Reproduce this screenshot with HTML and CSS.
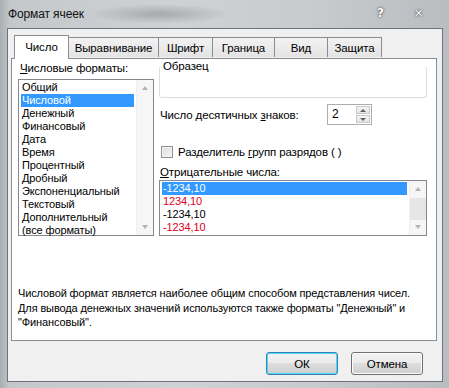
FILE: index.html
```html
<!DOCTYPE html>
<html>
<head>
<meta charset="utf-8">
<link rel="stylesheet" href="styles.css">
</head>
<body>
<div class="window">
  <div class="titlebar">
    <span class="title">Формат ячеек</span>
    <span class="ctl help">?</span>
    <span class="ctl close">✕</span>
  </div>
  <div class="client">
    <div class="tabs">
      <div class="tab active">Число</div>
      <div class="tab">Выравнивание</div>
      <div class="tab">Шрифт</div>
      <div class="tab">Граница</div>
      <div class="tab">Вид</div>
      <div class="tab">Защита</div>
    </div>
    <div class="panel">
      <div class="columns">
        <div class="leftcol">
          <div class="label"><u>Ч</u>исловые форматы:</div>
          <div class="listbox formats">
            <div class="items">
              <div class="item">Общий</div>
              <div class="item sel">Числовой</div>
              <div class="item">Денежный</div>
              <div class="item">Финансовый</div>
              <div class="item">Дата</div>
              <div class="item">Время</div>
              <div class="item">Процентный</div>
              <div class="item">Дробный</div>
              <div class="item">Экспоненциальный</div>
              <div class="item">Текстовый</div>
              <div class="item">Дополнительный</div>
              <div class="item">(все форматы)</div>
            </div>
            <div class="scrollbar disabled">
              <span class="arrow up"></span>
              <span class="track"></span>
              <span class="arrow down"></span>
            </div>
          </div>
        </div>
        <div class="rightcol">
          <fieldset class="sample">
            <legend>Образец</legend>
          </fieldset>
          <div class="decimals">
            <span class="label">Число десятичных <u>з</u>наков:</span>
            <div class="spinner">
              <span class="value">2</span>
              <div class="spinbtns">
                <span class="sbtn"><span class="arrow up"></span></span>
                <span class="sbtn"><span class="arrow down"></span></span>
              </div>
            </div>
          </div>
          <div class="check">
            <span class="box"></span>
            <span>Разделитель <u>г</u>рупп разрядов ( )</span>
          </div>
          <div class="label neglabel"><u>О</u>трицательные числа:</div>
          <div class="listbox negs">
            <div class="items">
              <div class="item sel">-1234,10</div>
              <div class="item red">1234,10</div>
              <div class="item">-1234,10</div>
              <div class="item red">-1234,10</div>
            </div>
            <div class="scrollbar">
              <span class="arrow up"></span>
              <span class="track"><span class="thumb"></span></span>
              <span class="arrow down"></span>
            </div>
          </div>
        </div>
      </div>
      <div class="desc">Числовой формат является наиболее общим способом представления чисел.<br>Для вывода денежных значений используются также форматы "Денежный" и<br>"Финансовый".</div>
    </div>
    <div class="buttons">
      <div class="btn default">ОК</div>
      <div class="btn">Отмена</div>
    </div>
  </div>
</div>
</body>
</html>
```

FILE: styles.css
```css
* { box-sizing: border-box; }
html, body { margin: 0; padding: 0; }
body {
  width: 449px;
  height: 388px;
  overflow: hidden;
  font-family: "Liberation Sans", Arial, sans-serif;
  font-size: 11px;
  letter-spacing: -0.12px;
  color: #000;
}
.window {
  width: 449px;
  height: 388px;
  display: flex;
  flex-direction: column;
  padding: 0 6px 6px 7px;
  background:
    radial-gradient(ellipse 70px 10px at 160px 14px, rgba(90,95,100,0.35), rgba(90,95,100,0) 100%),
    linear-gradient(90deg, #a8aeb2 0px, #c4c8cb 10px, #cfd2d4 40%, #c8cbcd 70%, #b9bdc0 100%);
}
.titlebar {
  height: 28px;
  display: flex;
  align-items: center;
  padding-left: 1px;
}
.title {
  font-size: 12px;
  color: #111;
  flex: 1;
  margin-top: -1px;
}
.ctl {
  color: #fff;
  font-weight: bold;
  text-shadow: 0 0 3px #555, 0 0 1px #333;
  font-family: "DejaVu Sans", sans-serif;
}
.help { font-size: 12px; margin-right: 30px; margin-top: -2px; }
.close { font-size: 11px; margin-right: 20px; margin-top: -2px; }
.client {
  flex: 1;
  background: #f0f0f0;
  border: 1px solid #6f7377;
  display: flex;
  flex-direction: column;
  padding: 6px 5px 0 3px;
}
.tabs {
  display: flex;
  align-items: flex-end;
  padding-left: 3px;
  height: 23px;
  position: relative;
  z-index: 1;
}
.tab {
  height: 20px;
  border: 1px solid #898c95;
  border-bottom: none;
  margin-left: -1px;
  background: linear-gradient(#f2f2f2, #e3e3e3);
  display: flex;
  align-items: center;
  justify-content: center;
  font-size: 11.5px;
  margin-bottom: 1px;
}
.tab:nth-child(2) { width: 91px; }
.tab:nth-child(3) { width: 55px; }
.tab:nth-child(4) { width: 63px; }
.tab:nth-child(5) { width: 54px; }
.tab:nth-child(6) { width: 55px; }
.tab.active {
  width: 55px;
  height: 24px;
  margin-bottom: -1px;
  background: #fff;
  margin-left: 0;
  padding-bottom: 2px;
  position: relative;
  z-index: 2;
}
.panel {
  height: 283px;
  background: #fff;
  border: 1px solid #898c95;
  display: flex;
  flex-direction: column;
  padding: 2px 9px 0 6px;
}
.columns {
  display: flex;
  gap: 5px;
}
.leftcol { width: 136px; }
.label { line-height: 14px; }
.leftcol .label { padding-left: 2px; margin-top: 0; margin-bottom: 4px; font-size: 11.5px; }
.listbox {
  border: 1px solid #828790;
  display: flex;
  background: #fff;
}
.formats { height: 157px; }
.items {
  flex: 1;
  padding: 1px 2px;
}
.item {
  height: 13px;
  line-height: 13px;
  padding-left: 1px;
  white-space: nowrap;
}
.item.sel { background: #3399ff; color: #fff; }
.item.red { color: #e0001b; }
.scrollbar {
  width: 17px;
  display: flex;
  flex-direction: column;
  background: #f6f6f6;
  border-left: 1px solid #f0f0f0;
}
.scrollbar .arrow { height: 16px; display: flex; align-items: center; justify-content: center; }
.scrollbar .track { flex: 1; display: flex; flex-direction: column; }
.arrow::before {
  content: "";
  display: block;
  width: 0;
  height: 0;
  border-left: 3.5px solid transparent;
  border-right: 3.5px solid transparent;
}
.arrow.up::before { border-bottom: 4px solid #b3b3b3; }
.arrow.down::before { border-top: 4px solid #b3b3b3; }
.negs .scrollbar .thumb { display: block; height: 22px; margin-top: 1px; background: #e6e6e6; }
.rightcol {
  flex: 1;
  display: flex;
  flex-direction: column;
}
.sample {
  margin: -2px 0 0 0;
  padding: 0;
  height: 39px;
  border: 1px solid #dcdcdc;
  border-top-color: transparent;
  border-radius: 3px;
}
.sample legend {
  padding: 0 1px;
  margin-left: 2px;
  line-height: 14px;
  font-size: 11.5px;
}
.decimals {
  display: flex;
  align-items: center;
  margin-top: 6px;
  height: 21px;
}
.decimals .label { width: 168px; padding-left: 1px; font-size: 11.5px; }
.spinner {
  width: 45px;
  height: 21px;
  border: 1px solid #abadb3;
  display: flex;
  background: #fff;
}
.spinner .value { flex: 1; padding-left: 4px; line-height: 19px; font-size: 12px; }
.spinbtns { width: 15px; height: 19px; display: flex; flex-direction: column; padding: 1px 1px 1px 0; gap: 1px; }
.sbtn {
  height: 8px;
  border: 1px solid #c8c8c8;
  background: linear-gradient(#f6f6f6, #e4e4e4);
  display: flex;
  align-items: center;
  justify-content: center;
}
.sbtn .arrow::before { border-left-width: 3px; border-right-width: 3px; }
.sbtn .arrow.up::before { border-bottom: 3px solid #606060; }
.sbtn .arrow.down::before { border-top: 3px solid #606060; }
.check {
  display: flex;
  align-items: center;
  gap: 5px;
  margin-top: 21px;
  padding-left: 2px;
  font-size: 11.5px;
}
.check .box {
  width: 12px;
  height: 12px;
  border: 1px solid #8e8f8f;
  background: linear-gradient(135deg, #dcdcdc, #f6f6f6);
  box-shadow: inset 0 0 0 1px #f4f4f4;
}
.neglabel { margin-top: 7px; margin-bottom: 1px; padding-left: 1px; font-size: 11.5px; }
.negs { height: 56px; }
.negs .items { padding: 1px 2px; }
.desc {
  margin-top: 50px;
  line-height: 14.5px;
  white-space: nowrap;
}
.buttons {
  display: flex;
  justify-content: flex-end;
  gap: 13px;
  padding: 11px 14px 0 0;
}
.btn {
  width: 72px;
  height: 23px;
  border: 1px solid #707070;
  border-radius: 3px;
  background: linear-gradient(#f2f2f2 0%, #ebebeb 49%, #dddddd 50%, #cfcfcf 100%);
  box-shadow: inset 0 0 0 1px #fcfcfc;
  display: flex;
  align-items: center;
  justify-content: center;
  font-size: 11.5px;
}
.btn.default {
  border-color: #3c7fb1;
  box-shadow: inset 0 0 0 1px #48d7fb;
}
```
